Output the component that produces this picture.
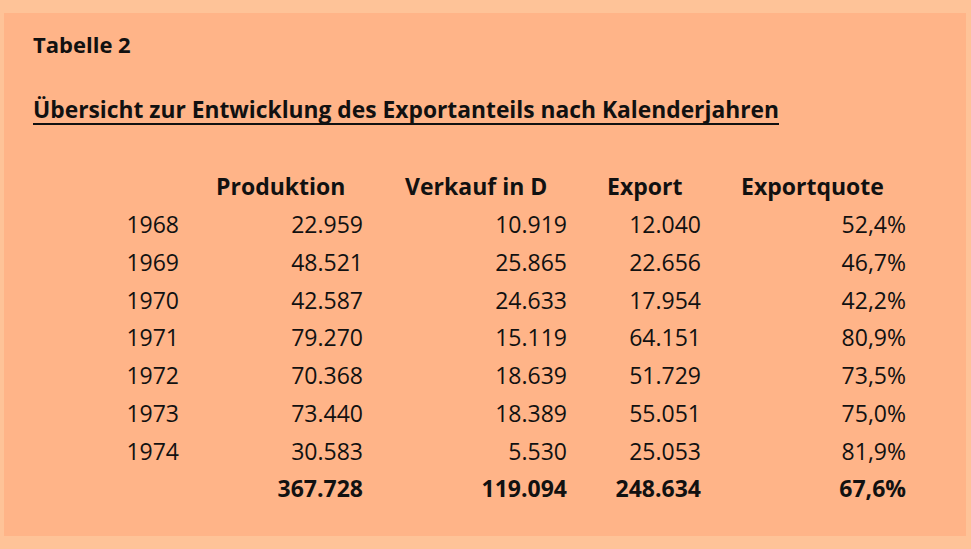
const rows = [
  ["1968", "22.959", "10.919", "12.040", "52,4%"],
  ["1969", "48.521", "25.865", "22.656", "46,7%"],
  ["1970", "42.587", "24.633", "17.954", "42,2%"],
  ["1971", "79.270", "15.119", "64.151", "80,9%"],
  ["1972", "70.368", "18.639", "51.729", "73,5%"],
  ["1973", "73.440", "18.389", "55.051", "75,0%"],
  ["1974", "30.583", "5.530", "25.053", "81,9%"],
];

const cols = "grid grid-cols-[175px_184px_204px_134px_205px] h-[37.75px] items-center";

export default function App() {
  return (
    <div className="w-[971px] h-[549px] bg-[#fec398] pt-[13px] pb-[13px] pl-[4px] pr-[5px] text-[#111]" style={{ fontFamily: "'Open Sans', sans-serif" }}>
      <div className="h-full bg-[#ffb488] pt-[18px]">
        <h1 className="pl-[29px] text-[22px] font-bold leading-[26px]">Tabelle 2</h1>
        <h2 className="pl-[29px] mt-[39px] text-[22.8px] font-bold leading-[28px] underline underline-offset-[5px] decoration-[2px]">
          Übersicht zur Entwicklung des Exportanteils nach Kalenderjahren
        </h2>
        <div className="mt-[44px] text-[23px] leading-none">
          <div className={cols + " font-bold"}>
            <div />
            <div className="pl-[37px]">Produktion</div>
            <div className="pl-[42px]">Verkauf in D</div>
            <div className="pl-[40px]">Export</div>
            <div className="pl-[40px]">Exportquote</div>
          </div>
          {rows.map((r) => (
            <div key={r[0]} className={cols}>
              <div className="text-right">{r[0]}</div>
              <div className="text-right">{r[1]}</div>
              <div className="text-right">{r[2]}</div>
              <div className="text-right">{r[3]}</div>
              <div className="text-right">{r[4]}</div>
            </div>
          ))}
          <div className={cols + " font-bold"}>
            <div />
            <div className="text-right">367.728</div>
            <div className="text-right">119.094</div>
            <div className="text-right">248.634</div>
            <div className="text-right">67,6%</div>
          </div>
        </div>
      </div>
    </div>
  );
}
